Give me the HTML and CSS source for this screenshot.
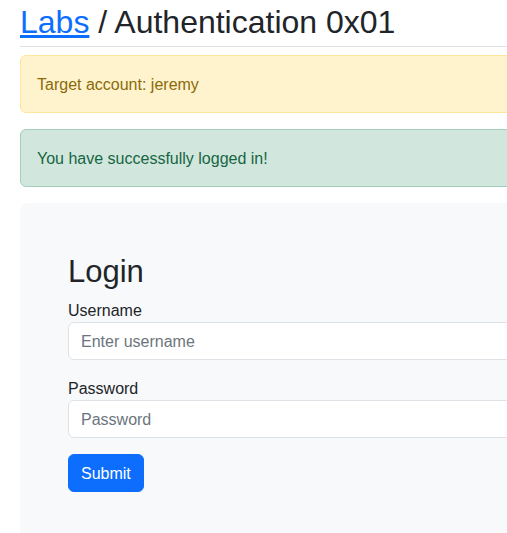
FILE: index.html
```html
<!DOCTYPE html>
<html lang="en">
<head>
<meta charset="utf-8">
<title>Labs / Authentication 0x01</title>
<link rel="stylesheet" href="styles.css">
</head>
<body>
<div class="page">
  <header class="page-header">
    <h1 class="title"><a href="#" class="crumb">Labs</a> / Authentication 0x01</h1>
  </header>
  <div class="alert alert-warning">Target account: jeremy</div>
  <div class="alert alert-success">You have successfully logged in!</div>
  <div class="card">
    <h2 class="card-title">Login</h2>
    <form class="form">
      <div class="field">
        <label class="label" for="username">Username</label>
        <input class="input" id="username" type="text" placeholder="Enter username">
      </div>
      <div class="field">
        <label class="label" for="password">Password</label>
        <input class="input" id="password" type="password" placeholder="Password">
      </div>
      <div>
        <button class="btn" type="button">Submit</button>
      </div>
    </form>
  </div>
</div>
</body>
</html>
```

FILE: styles.css
```css
html, body {
  margin: 0;
  padding: 0;
  overflow: hidden;
  background: #ffffff;
}
body {
  font-family: "Liberation Sans", Arial, sans-serif;
  font-size: 16px;
  line-height: 24px;
  color: #212529;
}
.page {
  width: 627px;
  padding: 0 20px;
}
.page-header {
  padding-top: 3px;
  padding-bottom: 5px;
  border-bottom: 1px solid #dee2e6;
}
.title {
  margin: 0;
  font-size: 32px;
  line-height: 38px;
  font-weight: 400;
  color: #212529;
}
.crumb {
  color: #0d6efd;
  text-decoration: underline;
}
.alert {
  padding: 17px 16px 15px;
  border: 1px solid transparent;
  border-radius: 6px;
  margin-bottom: 16px;
}
.alert-warning {
  margin-top: 8px;
  color: #8a6a08;
  background: #fff3cd;
  border-color: #ffe69c;
}
.alert-success {
  color: #176543;
  background: #d1e7dd;
  border-color: #a3cfbb;
}
.card {
  background: #f8f9fa;
  border-radius: 8px;
  padding: 51px 48px 48px;
}
.card-title {
  margin: 0 0 8px;
  font-size: 31px;
  line-height: 36px;
  font-weight: 400;
  color: #212529;
}
.form {
  display: flex;
  flex-direction: column;
  gap: 16px;
}
.field {
  display: flex;
  flex-direction: column;
}
.label {
  display: block;
  padding-top: 1px;
  line-height: 23px;
}
.input {
  box-sizing: border-box;
  width: 100%;
  height: 38px;
  padding: 7px 12px 5px;
  font-family: inherit;
  font-size: 16px;
  color: #212529;
  background: #ffffff;
  border: 1px solid #dee2e6;
  border-radius: 6px;
  outline: none;
}
.input::placeholder {
  color: #6c757d;
  opacity: 1;
}
.btn {
  height: 38px;
  padding: 7px 12px 5px;
  font-family: inherit;
  font-size: 16px;
  line-height: 24px;
  color: #ffffff;
  background: #0d6efd;
  border: 1px solid #0d6efd;
  border-radius: 6px;
}
```
